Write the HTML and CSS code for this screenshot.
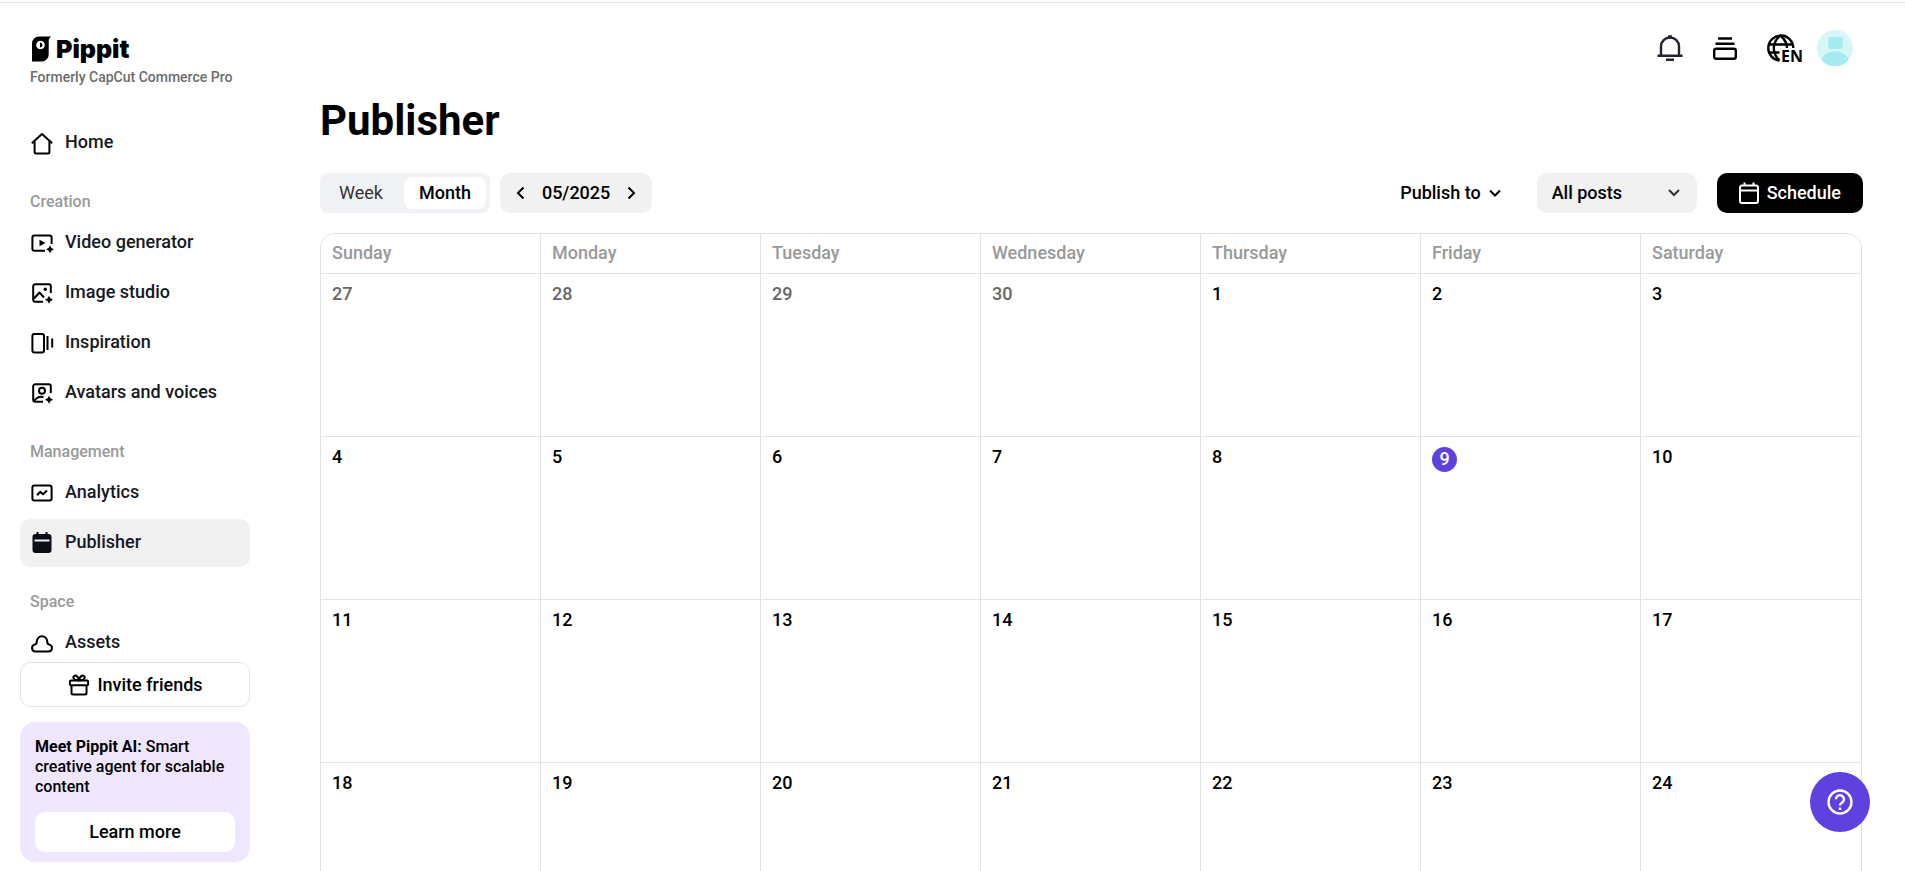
FILE: index.html
```html
<!DOCTYPE html>
<html lang="en">

<head>
    <meta charset="UTF-8">
    <meta name="viewport" content="width=device-width, initial-scale=1.0">
    <title>Publisher - Pippit</title>
    <link rel="stylesheet" href="styles.css">
</head>

<body>
    <div class="layout">
        <aside class="sidebar">
            <a class="logo" href="#">
                <svg width="20" height="26" viewBox="0 0 20 26">
                    <path d="M0 7.500a7 7 0 0 1 7-7H19.500C17.500 1.500 16.700 3 16.700 5V18a7 7 0 0 1-7 7.500H0z" fill="#000" />
                    <circle cx="8.500" cy="9" r="4.300" fill="#fff" />
                    <path d="M8 6.500a2.500 2.500 0 0 1 0 5z" fill="#000" />
                </svg>
                <span class="logo-name">Pippit</span>
            </a>
            <p class="tagline">Formerly CapCut Commerce Pro</p>

            <nav class="nav">
                <a class="nav-item" href="#">
                    <svg class="icon" viewBox="0 0 24 24">
                        <path d="M1.800 12.200 12 3l10.200 9.200M4.600 10.500V21a1.500 1.500 0 0 0 1.500 1.500h11.800a1.500 1.500 0 0 0 1.500-1.500V10.500" />
                    </svg>
                    Home
                </a>

                <h2 class="nav-title">Creation</h2>
                <a class="nav-item" href="#">
                    <svg class="icon" viewBox="0 0 24 24">
                        <path d="M21.600 13V6.500a2 2 0 0 0-2-2H4.400a2 2 0 0 0-2 2v11.200a2 2 0 0 0 2 2H15" />
                        <path class="fill" d="M9.500 8.800v6.400l6-3.200zM20 14.200q.7 3.100 4 4-3.300.9-4 4-.7-3.100-4-4 3.300-.9 4-4z" />
                    </svg>
                    Video generator
                </a>
                <a class="nav-item" href="#">
                    <svg class="icon" viewBox="0 0 24 24">
                        <path d="M20.800 12V5.300a2 2 0 0 0-2-2H5.200a2 2 0 0 0-2 2v13.400a2 2 0 0 0 2 2H13M4 17.500l5.500-6 4.500 5" />
                        <circle class="fill" cx="15.300" cy="8.300" r="1.700" />
                        <path class="fill" d="M19 14.700q.7 3.100 4 4-3.300.9-4 4-.7-3.100-4-4 3.300-.9 4-4z" />
                    </svg>
                    Image studio
                </a>
                <a class="nav-item" href="#">
                    <svg class="icon" viewBox="0 0 24 24">
                        <rect x="2.400" y="2.900" width="11.600" height="18.600" rx="2" />
                        <path d="M17.500 5v14M22.200 7.500v9" />
                    </svg>
                    Inspiration
                </a>
                <a class="nav-item" href="#">
                    <svg class="icon" viewBox="0 0 24 24">
                        <path d="M20.800 12V5.300a2 2 0 0 0-2-2H5.200a2 2 0 0 0-2 2v13.400a2 2 0 0 0 2 2H13M4.500 20q2.500-5 9-4" />
                        <circle cx="12" cy="9.800" r="3" />
                        <path class="fill" d="M19 14.700q.7 3.100 4 4-3.300.9-4 4-.7-3.100-4-4 3.300-.9 4-4z" />
                    </svg>
                    Avatars and voices
                </a>

                <h2 class="nav-title">Management</h2>
                <a class="nav-item" href="#">
                    <svg class="icon" viewBox="0 0 24 24">
                        <rect x="2.400" y="4.400" width="19.200" height="15.200" rx="2" />
                        <path d="m7 14.200 3.300-3.500 2.700 2.600 4-3.700" />
                    </svg>
                    Analytics
                </a>
                <a class="nav-item active" href="#">
                    <svg class="icon" viewBox="0 0 24 24">
                        <path class="dark" d="M6.500 1H8.500V3H15.500V1H17.500V3H18.500A3 3 0 0 1 21.500 6V19a3 3 0 0 1-3 3H5.500a3 3 0 0 1-3-3V6A3 3 0 0 1 5.500 3H6.500z" />
                        <path class="slot" d="M4.500 9.500h15" />
                    </svg>
                    Publisher
                </a>

                <h2 class="nav-title">Space</h2>
                <a class="nav-item" href="#">
                    <svg class="icon" viewBox="0 0 24 24">
                        <path d="M5.500 20.500a3.500 3.500 0 0 1-.8-6.900q2.300-.5 2-3a5.300 5.300 0 1 1 10.600 0q-.3 2.500 2 3a3.500 3.500 0 0 1-.8 6.900z" />
                    </svg>
                    Assets
                </a>
            </nav>

            <button class="invite" type="button">
                <svg class="icon" viewBox="0 0 24 24">
                    <rect x="2.900" y="7.400" width="18.200" height="4.800" rx="1" />
                    <path d="M4.500 12.200V20a1.500 1.500 0 0 0 1.500 1.500h12a1.500 1.500 0 0 0 1.500-1.500v-7.800M12 7.400C9 7.200 6 6.500 6.300 4.200 7 1.500 11 2 12 7.400 13 2 17 1.500 17.700 4.200 18 6.500 15 7.200 12 7.400z" />
                </svg>
                Invite friends
            </button>

            <section class="promo">
                <p class="promo-text"><strong>Meet Pippit AI:</strong> Smart creative agent for scalable content</p>
                <button class="learn-more" type="button">Learn more</button>
            </section>
        </aside>

        <main class="main">
            <header class="topbar">
                <button class="top-icon" type="button" aria-label="Notifications">
                    <svg width="26" height="28" viewBox="0 0 26 28">
                        <path class="bell" d="M.5 21.800h25M4 22V12.500a9 9 0 0 1 18 0V22M9 25.800h8M11 2.500h4" />
                    </svg>
                </button>
                <button class="top-icon" type="button" aria-label="Tasks">
                    <svg width="26" height="28" viewBox="0 0 26 28">
                        <path class="stack" d="M6 4.500h14M3.500 9.800h19" />
                        <rect class="stack" x="2.200" y="14.800" width="21.600" height="10" rx="2" />
                    </svg>
                </button>
                <button class="top-icon language" type="button" aria-label="Language">
                    <svg width="28" height="28" viewBox="0 0 28 28">
                        <path class="globe" d="M12.500 26.500A12.500 12.500 0 1 1 26.300 14M12.500 26.500C4.500 19 5 8 13.500 1.500 18 5.500 20 9 20 14M2.500 10.500h23M2.500 18.500h10" />
                    </svg>
                    <span class="language-code">EN</span>
                </button>
                <button class="top-icon" type="button" aria-label="Account">
                    <svg width="36" height="36" viewBox="0 0 36 36">
                        <circle cx="18" cy="18" r="18" fill="#d8f5f8" />
                        <path d="M13 7h11q2.500.500 2 3-1 2 0 4 .500 4-2 5H13q-2.500-.500-2-3 1-3 0-6 0-2.500 2-3zM4 29.500a16 16 0 0 1 28 0 18 18 0 0 1-28 0z" fill="#a5ebf1" />
                    </svg>
                </button>
            </header>

            <h1 class="page-title">Publisher</h1>

            <div class="toolbar">
                <div class="view-switch">
                    <button class="view" type="button">Week</button>
                    <button class="view selected" type="button">Month</button>
                </div>
                <div class="month-picker">
                    <button type="button" aria-label="Previous month">
                        <svg width="14" height="14" viewBox="0 0 14 14"><path class="chevron" d="M9.500 1.500 4 7l5.500 5.500" /></svg>
                    </button>
                    <span>05/2025</span>
                    <button type="button" aria-label="Next month">
                        <svg width="14" height="14" viewBox="0 0 14 14"><path class="chevron" d="M4.500 1.500 10 7l-5.500 5.500" /></svg>
                    </button>
                </div>
                <button class="publish-to" type="button">
                    Publish to
                    <svg width="14" height="14" viewBox="0 0 14 14"><path class="chevron" d="M2 4.500 7 9.500l5-5" /></svg>
                </button>
                <div class="filter">
                    <select aria-label="Filter posts">
                        <option>All posts</option>
                    </select>
                    <svg class="filter-arrow" width="14" height="14" viewBox="0 0 14 14"><path class="chevron" d="M2 4 7 9l5-5" /></svg>
                </div>
                <button class="schedule" type="button">
                    <svg width="20" height="24" viewBox="0 0 20 24">
                        <path class="calendar" d="M3 4.500h14a2 2 0 0 1 2 2V20a2 2 0 0 1-2 2H3a2 2 0 0 1-2-2V6.500a2 2 0 0 1 2-2zM5.500 1.500v3M14.500 1.500v3M1 9.500h18" />
                    </svg>
                    Schedule
                </button>
            </div>

            <div class="calendar-box">
                <table class="month">
                    <thead>
                        <tr>
                            <th>Sunday</th>
                            <th>Monday</th>
                            <th>Tuesday</th>
                            <th>Wednesday</th>
                            <th>Thursday</th>
                            <th>Friday</th>
                            <th>Saturday</th>
                        </tr>
                    </thead>
                    <tbody>
                        <tr>
                            <td class="other">27</td>
                            <td class="other">28</td>
                            <td class="other">29</td>
                            <td class="other">30</td>
                            <td>1</td>
                            <td>2</td>
                            <td>3</td>
                        </tr>
                        <tr>
                            <td>4</td>
                            <td>5</td>
                            <td>6</td>
                            <td>7</td>
                            <td>8</td>
                            <td><span class="today">9</span></td>
                            <td>10</td>
                        </tr>
                        <tr>
                            <td>11</td>
                            <td>12</td>
                            <td>13</td>
                            <td>14</td>
                            <td>15</td>
                            <td>16</td>
                            <td>17</td>
                        </tr>
                        <tr>
                            <td>18</td>
                            <td>19</td>
                            <td>20</td>
                            <td>21</td>
                            <td>22</td>
                            <td>23</td>
                            <td>24</td>
                        </tr>
                    </tbody>
                </table>
            </div>
        </main>
    </div>

    <button class="help" type="button" aria-label="Help">
        <svg width="26" height="26" viewBox="0 0 26 26">
            <circle cx="13" cy="13" r="11.500" />
            <path d="M9 10.300a4 4 0 1 1 6.500 3Q13 14.800 13 16.500" />
            <path d="M13 18.600v2.400" />
        </svg>
    </button>
</body>

</html>
```

FILE: styles.css
```css
* {
    box-sizing: border-box;
}

body {
    margin: 0;
    height: 100vh;
    padding-top: 2px;
    overflow: hidden;
    font-family: Roboto, "Liberation Sans", sans-serif;
    font-size: 18px;
    font-weight: 500;
    line-height: 24px;
    color: #000;
    background-color: #fff;
}

h1,
h2,
p {
    margin: 0;
}

a {
    color: inherit;
    text-decoration: none;
}

button,
select {
    font: inherit;
    color: inherit;
    border: none;
    background: none;
    padding: 0;
    cursor: pointer;
}

svg {
    display: block;
    flex: none;
}

.layout {
    display: flex;
    height: 100%;
    border-top: 1px solid #e3e3e3;
}

/* Sidebar */
.sidebar {
    display: flex;
    flex-direction: column;
    width: 270px;
    flex: none;
    padding: 30px 20px 9px;
}

.logo {
    display: flex;
    align-items: center;
    gap: 4px;
    height: 32px;
    padding-left: 12px;
}

.logo-name {
    font-family: Inter, sans-serif;
    font-size: 25px;
    font-weight: 900;
}

.tagline {
    padding-left: 10px;
    font-size: 14px;
    color: #6b6b6b;
}

.nav {
    flex: 1;
    min-height: 0;
    overflow: hidden;
    padding-top: 30px;
}

.nav-item {
    display: flex;
    align-items: center;
    gap: 11px;
    height: 48px;
    margin-bottom: 2px;
    padding: 0 10px 2px;
    border-radius: 10px;
    color: #161823;
}

.nav-item .icon {
    margin-top: 2px;
}

.nav-item.active {
    background-color: #f1f1f1;
}

.nav-title {
    height: 50px;
    padding: 21px 10px 0;
    font-size: 16px;
    font-weight: 500;
    color: #999;
}

.icon {
    width: 24px;
    height: 24px;
    fill: none;
    stroke: #000;
    stroke-width: 2;
    stroke-linejoin: round;
}

.icon .fill {
    fill: #000;
    stroke: none;
}

.icon .dark {
    fill: #0b0d17;
    stroke: none;
}

.icon .slot {
    stroke: #f1f1f1;
}

.invite {
    display: flex;
    align-items: center;
    justify-content: center;
    gap: 6px;
    height: 45px;
    flex: none;
    border: 1px solid #e3e3e3;
    border-radius: 10px;
}

.promo {
    margin-top: 15px;
    padding: 15px 15px 10px;
    border-radius: 15px;
    background-color: #efe7ff;
}

.promo-text {
    margin-bottom: 15px;
    font-size: 16px;
    line-height: 20px;
}

.promo-text strong {
    font-weight: 700;
}

.learn-more {
    width: 100%;
    height: 40px;
    border-radius: 10px;
    background-color: #fff;
}

/* Main area */
.main {
    flex: 1;
    min-width: 0;
    overflow: hidden;
    padding: 27px 42px 0 50px;
}

.topbar {
    display: flex;
    align-items: center;
    justify-content: flex-end;
    gap: 29px;
    height: 36px;
    padding-right: 10px;
}

.bell,
.stack,
.globe {
    fill: none;
    stroke: #000;
    stroke-width: 2.4;
}

.bell {
    stroke: #23232e;
}

.language {
    position: relative;
    width: 38px;
    margin-right: -17px;
}

.language-code {
    position: absolute;
    left: 14px;
    bottom: -2px;
    font-family: "Open Sans", sans-serif;
    font-size: 16px;
    font-weight: 700;
    line-height: 16px;
}

.page-title {
    margin-top: 31px;
    font-size: 42px;
    font-weight: 700;
    line-height: 48px;
}

.toolbar {
    display: flex;
    align-items: center;
    height: 40px;
    margin: 28px 0 20px;
}

.view-switch {
    display: flex;
    gap: 6px;
    padding: 4px;
    border-radius: 8px;
    background-color: #f1f2f5;
}

.view {
    height: 32px;
    padding: 0 15px;
    border-radius: 8px;
    font-weight: 400;
    color: #333;
}

.view.selected {
    background-color: #fff;
    font-weight: 500;
    color: #000;
}

.month-picker {
    display: flex;
    align-items: center;
    gap: 14px;
    height: 40px;
    margin-left: 10px;
    padding: 0 14px;
    border-radius: 10px;
    background-color: #f1f1f1;
}

.chevron {
    fill: none;
    stroke: currentColor;
    stroke-width: 2;
}

.publish-to {
    display: flex;
    align-items: center;
    gap: 7px;
    margin-left: auto;
    margin-right: 35px;
}

.filter {
    position: relative;
    color: #333;
}

.filter select {
    appearance: none;
    width: 160px;
    height: 40px;
    padding: 0 15px;
    border-radius: 10px;
    background-color: #f1f1f1;
    color: #000;
}

.filter-arrow {
    position: absolute;
    top: 13px;
    right: 16px;
    pointer-events: none;
}

.schedule {
    display: flex;
    align-items: center;
    justify-content: center;
    gap: 8px;
    height: 40px;
    margin-left: 20px;
    padding: 0 22px;
    border-radius: 10px;
    background-color: #000;
    color: #fff;
}

.calendar {
    fill: none;
    stroke: #fff;
    stroke-width: 2;
}

/* Calendar */
.calendar-box {
    margin-right: 1px;
    overflow: hidden;
    border: 1px solid #e3e3e3;
    border-radius: 15px 15px 0 0;
}

.month {
    width: 100%;
    table-layout: fixed;
    border-spacing: 0;
}

.month th,
.month td {
    border-right: 1px solid #e3e3e3;
    border-bottom: 1px solid #e3e3e3;
    text-align: left;
}

.month th:last-child,
.month td:last-child {
    border-right: none;
}

.month th {
    height: 40px;
    padding: 0 11px 2px;
    font-weight: 500;
    color: #999;
}

.month td {
    height: 163px;
    padding: 8px 11px;
    vertical-align: top;
}

.month .other {
    color: #666;
}

.today {
    display: block;
    width: 25px;
    height: 25px;
    margin: 2px 0;
    border-radius: 50%;
    background-color: #5e41de;
    color: #fff;
    text-align: center;
}

.help {
    position: fixed;
    right: 35px;
    bottom: 39px;
    display: flex;
    align-items: center;
    justify-content: center;
    width: 60px;
    height: 60px;
    border-radius: 50%;
    background-color: #5e41de;
}

.help svg {
    fill: none;
    stroke: #fff;
    stroke-width: 2.4;
}
```
